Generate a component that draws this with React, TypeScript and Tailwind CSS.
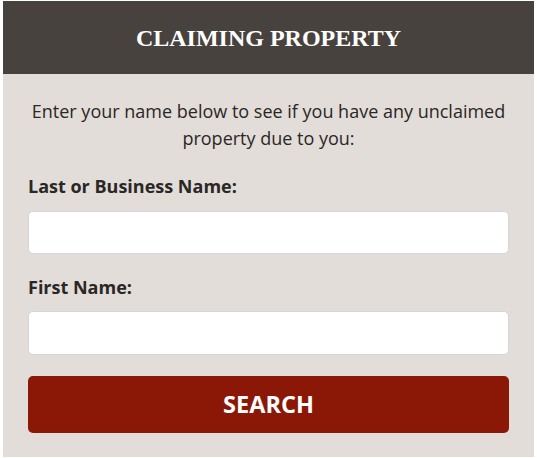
import React from 'react';

const App: React.FC = () => {
  return (
    <div className="bg-white w-[537px] h-[458px] pt-px pl-[3px] overflow-hidden">
      <div className="w-[531px] h-[456px] bg-[#e2ddd9] flex flex-col">
        <div className="h-[73px] bg-[#47423e] flex items-center justify-center">
          <h1 className="text-white text-[24px] font-bold font-['Liberation_Serif',serif]">
            CLAIMING PROPERTY
          </h1>
        </div>
        <form className="px-[25px] pt-[24px] flex flex-col font-['Open_Sans',sans-serif] text-[#2a2725]">
          <p className="text-center text-[18px] leading-[27px]">
            Enter your name below to see if you have any unclaimed property due to you:
          </p>
          <label className="mt-[22px] text-[18px] font-bold leading-[24px]">Last or Business Name:</label>
          <input
            type="text"
            className="mt-[13px] h-[43px] w-full bg-white border border-[#d4d6de] rounded-[5px] px-3"
          />
          <label className="mt-[21px] text-[18px] font-bold leading-[24px]">First Name:</label>
          <input
            type="text"
            className="mt-[12px] h-[44px] w-full bg-white border border-[#d4d6de] rounded-[5px] px-3"
          />
          <button
            type="button"
            className="mt-[21px] h-[57px] w-full bg-[#8b1807] rounded-[5px] text-white text-[23.5px] font-bold"
          >
            SEARCH
          </button>
        </form>
      </div>
    </div>
  );
};

export default App;
